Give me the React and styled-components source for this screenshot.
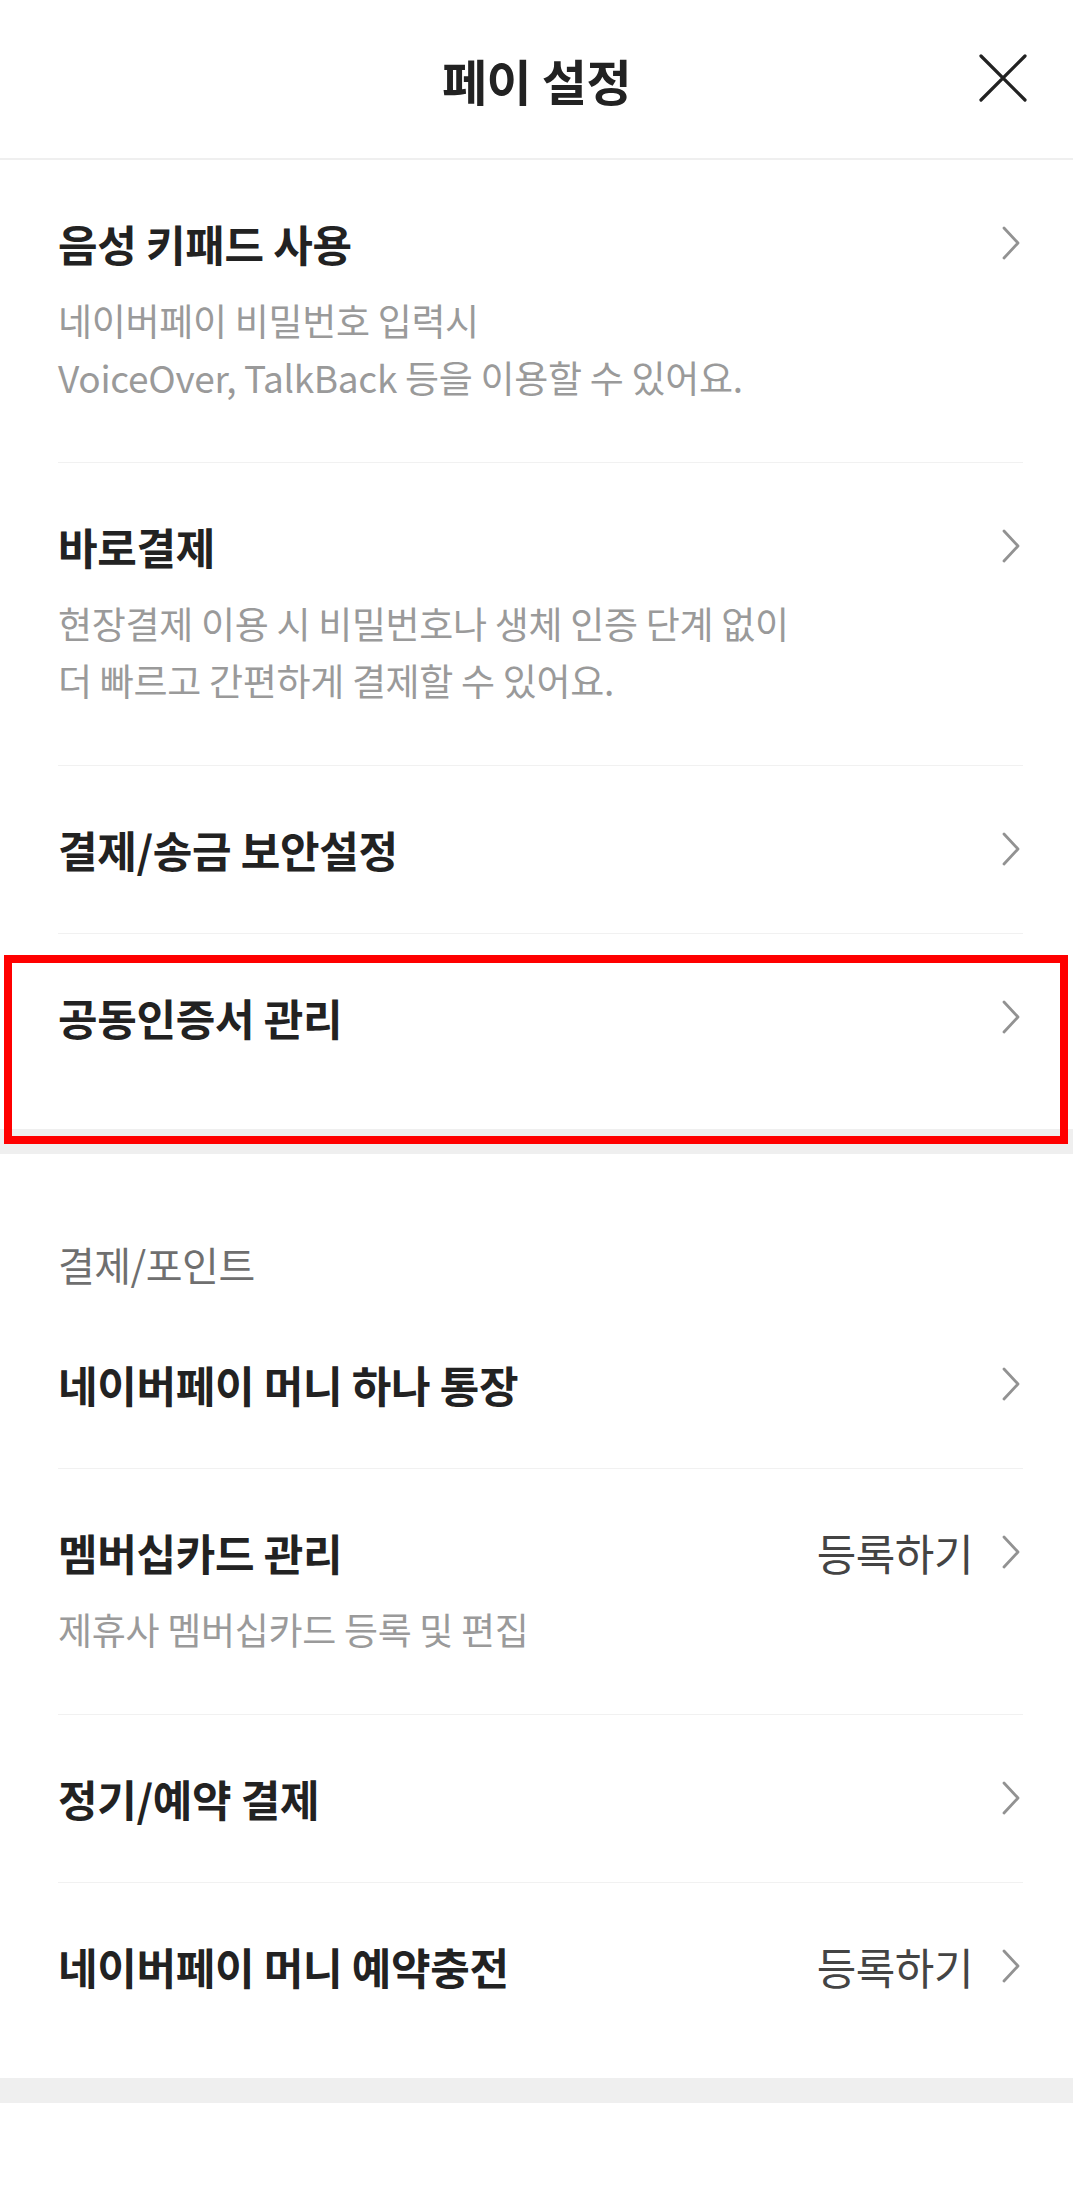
import React from 'react'
import styled, { createGlobalStyle } from 'styled-components'

const GlobalStyle = createGlobalStyle`
    html, body {
        margin: 0;
        padding: 0;
        background: #fff;
    }
    body {
        font-family: "Noto Sans CJK KR", "Noto Sans", sans-serif;
        color: #222;
    }
`

const Page = styled.div`
    width: 1073px;
    min-height: 2189px;
    background: #fff;
`

const Header = styled.header`
    position: relative;
    height: 158px;
    border-bottom: 2px solid #efefef;
    display: flex;
    align-items: center;
    justify-content: center;
`

const HeaderTitle = styled.h1`
    margin: 0;
    font-size: 49px;
    font-weight: 700;
    letter-spacing: -0.5px;
    color: #222;
`

const CloseButton = styled.button`
    position: absolute;
    right: 46px;
    top: 54px;
    width: 48px;
    height: 48px;
    padding: 0;
    border: 0;
    background: none;
    display: flex;
    align-items: center;
    justify-content: center;
`

const Section = styled.section`
    padding: 0 50px 0 58px;
`

const SectionLabel = styled.div`
    padding: 86px 0 13px;
    font-size: 40px;
    line-height: 48px;
    color: #6f6f6f;
    letter-spacing: -0.5px;
`

const Band = styled.div`
    height: 25px;
    background: #efefef;
`

const Item = styled.div`
    position: relative;
    padding: 55px 0 ${props => props.last ? '84px' : '56px'};
    border-bottom: ${props => props.last ? 'none' : '1px solid #f1f1f1'};
`

const Row = styled.div`
    display: flex;
    align-items: center;
    justify-content: space-between;
    height: 56px;
`

const Title = styled.div`
    font-size: 43px;
    font-weight: 700;
    letter-spacing: -0.3px;
    color: #222;
`

const Aside = styled.div`
    display: flex;
    align-items: center;
    gap: 26px;
    font-size: 43px;
    letter-spacing: -0.5px;
    color: #444;
`

const Desc = styled.div`
    margin-top: 21px;
    font-size: 37px;
    line-height: 57px;
    letter-spacing: -0.3px;
    color: #9a9a9a;
`

const Highlight = styled.div`
    position: absolute;
    top: 21px;
    left: -54px;
    right: -45px;
    bottom: -15px;
    border: 8px solid #ff0000;
    pointer-events: none;
`

const Chevron = () => (
    <svg width="24" height="34" viewBox="0 0 24 34" fill="none">
        <path d="M5 2 L19 17 L5 32" stroke="#929292" strokeWidth="2.8" strokeLinecap="round" strokeLinejoin="round" />
    </svg>
)

const CloseIcon = () => (
    <svg width="48" height="48" viewBox="0 0 48 48" fill="none">
        <path d="M2 2 L46 46 M46 2 L2 46" stroke="#222" strokeWidth="3.2" strokeLinecap="round" />
    </svg>
)

const SettingItem = ({ title, desc, action, last, highlighted }) => (
    <Item last={last}>
        <Row>
            <Title>{title}</Title>
            <Aside>
                {action}
                <Chevron />
            </Aside>
        </Row>
        {desc && <Desc>{desc.map(line => <div key={line}>{line}</div>)}</Desc>}
        {highlighted && <Highlight />}
    </Item>
)

export default function App() {
    return (
        <Page>
            <GlobalStyle />
            <Header>
                <HeaderTitle>페이 설정</HeaderTitle>
                <CloseButton aria-label="닫기">
                    <CloseIcon />
                </CloseButton>
            </Header>
            <Section>
                <SettingItem
                    title="음성 키패드 사용"
                    desc={['네이버페이 비밀번호 입력시', 'VoiceOver, TalkBack 등을 이용할 수 있어요.']}
                />
                <SettingItem
                    title="바로결제"
                    desc={['현장결제 이용 시 비밀번호나 생체 인증 단계 없이', '더 빠르고 간편하게 결제할 수 있어요.']}
                />
                <SettingItem title="결제/송금 보안설정" />
                <SettingItem title="공동인증서 관리" last highlighted />
            </Section>
            <Band />
            <Section>
                <SectionLabel>결제/포인트</SectionLabel>
                <SettingItem title="네이버페이 머니 하나 통장" />
                <SettingItem
                    title="멤버십카드 관리"
                    action="등록하기"
                    desc={['제휴사 멤버십카드 등록 및 편집']}
                />
                <SettingItem title="정기/예약 결제" />
                <SettingItem title="네이버페이 머니 예약충전" action="등록하기" last />
            </Section>
            <Band />
        </Page>
    )
}
